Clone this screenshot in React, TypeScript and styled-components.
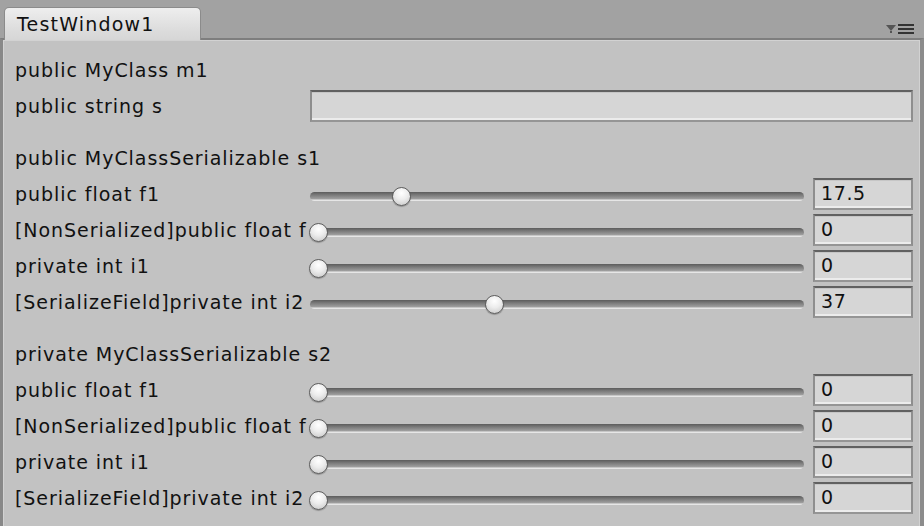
import React from "react";
import styled, { createGlobalStyle } from "styled-components";

const Global = createGlobalStyle`
  html, body { margin: 0; padding: 0; }
  body {
    width: 924px;
    height: 526px;
    overflow: hidden;
    background: #a2a2a2;
    font-family: "DejaVu Sans", "Liberation Sans", sans-serif;
  }
`;

const Window = styled.div`
  display: flex;
  flex-direction: column;
  width: 924px;
  height: 526px;
`;

const TabBar = styled.div`
  display: flex;
  align-items: flex-end;
  height: 38px;
  padding: 0 8px 0 4px;
  background: #a2a2a2;
  position: relative;
  z-index: 1;
`;

const Tab = styled.div`
  box-sizing: border-box;
  width: 197px;
  height: 33px;
  margin-bottom: -2px;
  padding: 3px 0 0 12px;
  border: 1px solid #8b8b8b;
  border-bottom: none;
  border-radius: 5px 5px 0 0;
  background: linear-gradient(#eeeeee, #dcdcdc 70%, #d6d6d6);
  color: #111;
  font-size: 19px;
  letter-spacing: 1.2px;
  line-height: 26px;
`;

const MenuButton = styled.div`
  margin-left: auto;
  margin-bottom: 2px;
  display: flex;
  align-items: flex-start;
  gap: 2px;
`;

const Panel = styled.div`
  flex: 1;
  box-sizing: border-box;
  border-top: 2px solid #7e7e7e;
  border-left: 3px solid #888888;
  border-right: 4px solid #8c8c8c;
  box-shadow: inset 1px 1px 0 #d2d2d2, inset -1px 0 0 #d2d2d2;
  background: #c2c2c2;
  padding: 12px 7px 0 12px;
  color: #111;
  font-size: 19px;
  letter-spacing: 0.95px;
`;

const Section = styled.div<{ $gap?: number }>`
  display: flex;
  flex-direction: column;
  margin-top: ${(p) => p.$gap ?? 0}px;
`;

const Row = styled.div`
  display: flex;
  align-items: center;
  height: 36px;
`;

const Label = styled.div<{ $fixed?: boolean }>`
  flex: none;
  width: ${(p) => (p.$fixed ? "295px" : "auto")};
  white-space: nowrap;
  overflow: hidden;
  line-height: 24px;
`;

const Field = styled.div<{ $width?: number }>`
  box-sizing: border-box;
  flex: ${(p) => (p.$width ? "none" : "1")};
  width: ${(p) => (p.$width ? `${p.$width}px` : "auto")};
  height: 32px;
  border-style: solid;
  border-width: 2px 2px 2px 2px;
  border-color: #616161 #8e8e8e #959595 #8e8e8e;
  background: #d6d6d6;
  box-shadow: inset 0 1px 0 #c6c6c6, inset 0 -2px 0 #ececec;
  padding-left: 6px;
  font-size: 19px;
  line-height: 27px;
  letter-spacing: 0.6px;
  color: #111;
`;

const SliderWrap = styled.div`
  position: relative;
  flex: 1;
  height: 20px;
  margin: 4px 9px 0 0;
`;

const Track = styled.div`
  position: absolute;
  left: 0;
  right: 0;
  top: 6px;
  height: 9px;
  border-radius: 5px;
  background: linear-gradient(#5c5c5c, #7c7c7c 35%, #9e9e9e 75%, #e6e6e6 90%);
`;

const Thumb = styled.div`
  position: absolute;
  top: 1px;
  box-sizing: border-box;
  width: 19px;
  height: 19px;
  border-radius: 50%;
  border: 1.5px solid #5d5d5d;
  background: radial-gradient(circle at 50% 30%, #ffffff, #ececec 45%, #c4c4c4 100%);
  box-shadow: 0 1px 1px rgba(0, 0, 0, 0.25);
`;

const MenuIcon = () => (
  <svg width="30" height="12" viewBox="0 0 30 12">
    <path d="M0 1h10L5 7z" fill="#555" />
    <rect x="4" y="7" width="2" height="2" fill="#555" />
    <rect x="12" y="0" width="16" height="2" fill="#333" />
    <rect x="12" y="4" width="16" height="2" fill="#333" />
    <rect x="12" y="8" width="16" height="2" fill="#333" />
  </svg>
);

const Slider = ({ value }: { value: number }) => (
  <SliderWrap>
    <Track />
    <Thumb style={{ left: `calc((100% - 18px) * ${value / 100} - 1px)` }} />
  </SliderWrap>
);

type Item = { label: string; value: number };

const SliderRow = ({ label, value }: Item) => (
  <Row>
    <Label $fixed>{label}</Label>
    <Slider value={value} />
    <Field $width={100}>{value}</Field>
  </Row>
);

const s1: Item[] = [
  { label: "public float f1", value: 17.5 },
  { label: "[NonSerialized]public float f", value: 0 },
  { label: "private int i1", value: 0 },
  { label: "[SerializeField]private int i2", value: 37 },
];

const s2: Item[] = [
  { label: "public float f1", value: 0 },
  { label: "[NonSerialized]public float f", value: 0 },
  { label: "private int i1", value: 0 },
  { label: "[SerializeField]private int i2", value: 0 },
];

export default function App() {
  return (
    <Window>
      <Global />
      <TabBar>
        <Tab>TestWindow1</Tab>
        <MenuButton>
          <MenuIcon />
        </MenuButton>
      </TabBar>
      <Panel>
        <Section>
          <Row>
            <Label>public MyClass m1</Label>
          </Row>
          <Row>
            <Label $fixed>public string s</Label>
            <Field />
          </Row>
        </Section>
        <Section $gap={16}>
          <Row>
            <Label>public MyClassSerializable s1</Label>
          </Row>
          {s1.map((it, i) => (
            <SliderRow key={i} {...it} />
          ))}
        </Section>
        <Section $gap={16}>
          <Row>
            <Label>private MyClassSerializable s2</Label>
          </Row>
          {s2.map((it, i) => (
            <SliderRow key={i} {...it} />
          ))}
        </Section>
      </Panel>
    </Window>
  );
}
